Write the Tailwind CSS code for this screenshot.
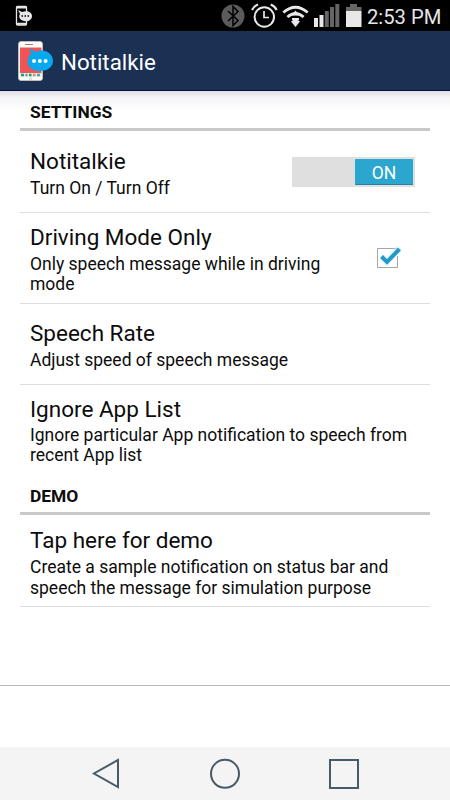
<!DOCTYPE html>
<html lang="en">
<head>
<meta charset="utf-8">
<title>Notitalkie</title>
<script src="https://cdn.jsdelivr.net/npm/@tailwindcss/browser@4"></script>
</head>
<body class="w-[450px] h-[800px] overflow-hidden bg-white font-['Roboto',sans-serif] text-[#0c0c0c] flex flex-col">
  <div class="h-[31px] shrink-0 bg-black flex items-center relative">
    <svg class="ml-[14px]" width="20" height="24" viewBox="0 0 20 24"><rect x="2.5" y="2.5" width="10" height="18.5" rx="1" fill="none" stroke="#e6e6e6" stroke-width="1.3"/><path d="M2 3.5h11M2 19.8h11" stroke="#e6e6e6" stroke-width="2"/><path d="M4 6l4 2c5-2 10 0 10 4s-4 6-8 5-6-4-4-7z" fill="#e6e6e6"/><path d="M7.500 12h1.5M10.500 12h1.5M13.500 12h1.5" stroke="#000" stroke-width="1.5"/></svg>
    <svg class="ml-[187px]" width="144" height="31" viewBox="221 0 144 31" fill="none">
      <circle cx="233" cy="16" r="11.5" fill="#5b5b5b"/><path d="M228 11l10 9.5-5 5V6.500l5 5-10 9.500" stroke="#000" stroke-width="1.5"/>
      <g stroke="#e8e8e8"><circle cx="264.300" cy="17" r="9.700" stroke-width="2"/><path d="M264 11v6.500h5" stroke-width="1.700"/><path d="M252 10q2-4 6-5.500M276.700 10q-2-4-6-5.500" stroke-width="2.200"/>
      <path d="M283.300 12.500q12.200-10.500 24.400 0M287.400 17q8.100-7 16.200 0" stroke-width="2.800"/></g>
      <path d="M295.500 10.500l4 5h-8zM295.500 27l-4.500-5.500q4.500-4 9 0z" fill="#e8e8e8"/><path d="M292 19h7" stroke="#e8e8e8" stroke-width="2"/>
      <path d="M314 18h4v9h-4zM319.500 15h4v12h-4z" fill="#e8e8e8"/><path d="M324.800 11h4v16h-4zM330 7h4v20h-4zM335.300 4h4v23h-4z" fill="#656565"/>
      <path d="M350 4h7v3h4.500v4h-15.500V7h4z" fill="#666"/><path d="M346 11h15.500v16H346z" fill="#e8e8e8"/>
    </svg>
    <span class="ml-[2px] text-[20.200px] leading-[24px] text-[#e6e6e6] whitespace-nowrap pt-[3px]">2:53 PM</span>
  </div>
  <header class="h-[60px] shrink-0 bg-[#1a3154] border-b border-[#080c4a] flex items-center">
    <svg class="ml-[17px]" width="37" height="44" viewBox="17 39 37 44">
      <rect x="18.500" y="41.500" width="24" height="39" rx="2.500" fill="#fffdfa" stroke="#d9c9be" stroke-width=".7"/>
      <path d="M25 44.500h8" stroke="#8b8583"/><path d="M20 47.500h21.500v26H20z" fill="#ef5557"/><path d="M20 73h21.500v4H20z" fill="#dff0e6"/>
      <path d="M21 75h3M29 75h2.500" stroke="#24a45a" stroke-width="2.500"/><path d="M25.500 75h2" stroke="#5f8fc0" stroke-width="2.500"/><path d="M33 75h2.500" stroke="#ef8a50" stroke-width="2.500"/><path d="M37 75h3" stroke="#55a0ba" stroke-width="2.500"/><circle cx="30.700" cy="78.800" r="1.200" fill="none" stroke="#bbb" stroke-width=".6"/>
      <path d="M29.500 48.500l6.500 3.500c8-4 17 1 17 9 0 6-5.500 10-13 10-12 0-16-10-9-17z" fill="#06a9ee"/><g fill="#fff"><circle cx="34" cy="61" r="2"/><circle cx="39.800" cy="61" r="2"/><circle cx="45.600" cy="61" r="2"/></g>
    </svg>
    <h1 class="ml-[7px] pt-[3px] text-[22.300px] leading-[28px] text-white">Notitalkie</h1>
  </header>
  <main class="h-[595px] shrink-0 px-5 border-b border-[#b9b9b9] bg-[linear-gradient(#dfdfe4_0px,#f5f5f7_7px,#ffffff_20px)]">
    <h2 class="h-[40px] border-b-[3px] border-[#c9c9c9] pl-[10px] pt-[11px] text-[17.400px] leading-[21px] font-bold">SETTINGS</h2>
    <section class="h-[82px] border-b border-[#dedede] px-[10px] flex items-center justify-between">
      <div class="pt-[2px]"><h3 class="text-[22.500px] leading-[29px] pb-[1px]">Notitalkie</h3><p class="text-[17.500px] leading-[21px] pt-[1px]">Turn On / Turn Off</p></div>
      <div class="w-[123px] h-[30px] mr-[5px] bg-[#dfdfdf] p-[2px] flex justify-end"><div class="w-[58px] h-[26px] rounded-[1px] bg-[#2ba6cf] border-b border-[#2380a0] text-white text-[17.500px] leading-[28px] text-center">ON</div></div>
    </section>
    <section class="h-[91px] border-b border-[#dedede] px-[10px] flex items-center justify-between">
      <div class="w-[320px] pt-[1px]"><h3 class="text-[22.500px] leading-[28px] pb-[2px]">Driving Mode Only</h3><p class="text-[17.500px] leading-[20.500px] pt-[1px]">Only speech message while in driving<br>mode</p></div>
      <svg class="mr-[16px]" width="30" height="32" viewBox="374 242 30 32"><path d="M377.500 248.500h20v19h-20z" fill="#fff" stroke="#a5a5a5"/><path d="M397.500 248v8" stroke="#fff" stroke-width="2"/><path d="M381.500 256.500l5 5 13-13.500" fill="none" stroke="#bceaff" stroke-width="7" opacity=".35"/><path d="M381.500 256.500l5.500 5.500 12.500-13" fill="none" stroke="#2499c8" stroke-width="4"/></svg>
    </section>
    <section class="h-[81px] border-b border-[#dedede] px-[10px] flex items-center">
      <div class="pt-[2px]"><h3 class="text-[22.500px] leading-[28px] pb-[2px]">Speech Rate</h3><p class="text-[17.500px] leading-[21px] pt-[1px]">Adjust speed of speech message</p></div>
    </section>
    <section class="h-[91px] px-[10px] flex items-center">
      <div class="pb-[1px]"><h3 class="text-[22.500px] leading-[28px] pb-[2px]">Ignore App List</h3><p class="text-[17.500px] leading-[20.500px]">Ignore particular App notification to speech from<br>recent App list</p></div>
    </section>
    <h2 class="h-[39px] border-b-[3px] border-[#c9c9c9] pl-[10px] pt-[10px] text-[17.400px] leading-[21px] font-bold">DEMO</h2>
    <section class="h-[92px] border-b border-[#dedede] px-[10px] flex items-center">
      <div class="pt-[3px]"><h3 class="text-[22.500px] leading-[29px] pb-[1px]">Tap here for demo</h3><p class="text-[17.500px] leading-[20.500px] pt-[1px]">Create a sample notification on status bar and<br>speech the message for simulation purpose</p></div>
    </section>
  </main>
  <div class="h-[61px] shrink-0 bg-white"></div>
  <nav class="h-[53px] shrink-0 bg-[#f4f4f4]">
    <svg width="450" height="53" viewBox="0 747 450 53" fill="none" stroke="#465a67" stroke-width="2"><path d="M118 760v27l-24-13.500z"/><circle cx="225" cy="773.800" r="14"/><path d="M330 760h28v28h-28z"/></svg>
  </nav>
</body>
</html>
